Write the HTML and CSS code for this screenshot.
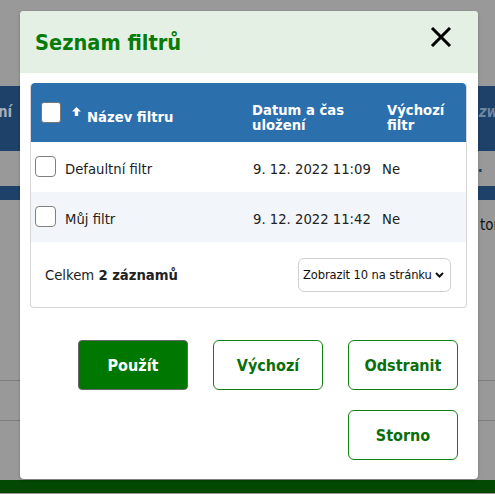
FILE: index.html
```html
<!DOCTYPE html>
<html lang="cs">
<head>
<meta charset="utf-8">
<title>Seznam filtrů</title>
<link rel="stylesheet" href="styles.css">
</head>
<body>
<div class="page">
  <div class="bg-top"></div>
  <div class="bg-band"><span class="bg-txt-l">ní</span><span class="bg-txt-r">zw</span></div>
  <div class="bg-gap"><span></span><span class="bg-dot">.</span></div>
  <div class="bg-band2"></div>
  <div class="bg-row"><span></span><span class="bg-txt-dark">tor</span></div>
  <div class="bg-fill"></div>
  <div class="bg-line"></div>
  <div class="bg-space"></div>
  <div class="bg-line"></div>
  <div class="bg-fill2"></div>
  <div class="bg-green"></div>
</div>

<div class="modal">
  <div class="modal-head">
    <h2 class="modal-title">Seznam filtrů</h2>
    <button class="close" aria-label="Zavřít">
      <svg width="22" height="20" viewBox="0 0 22 20"><path d="M2 1 L20 19 M20 1 L2 19" stroke="#000" stroke-width="3" fill="none"/></svg>
    </button>
  </div>
  <div class="modal-body">
    <div class="table">
      <div class="thead">
        <div class="th th-name">
          <span class="cb cb-head"></span>
          <svg class="arrow" width="9" height="9" viewBox="0 0 9 9"><path d="M4.5 0 L9 4.6 L6.2 4.6 L6.2 9 L2.8 9 L2.8 4.6 L0 4.6 Z" fill="#fff"/></svg>
          <span class="th-txt">Název filtru</span>
        </div>
        <div class="th th-date"><span class="th-txt">Datum a čas uložení</span></div>
        <div class="th th-def"><span class="th-txt">Výchozí filtr</span></div>
      </div>
      <div class="tr">
        <div class="td td-name"><span class="cb"></span><span>Defaultní filtr</span></div>
        <div class="td td-date">9. 12. 2022 11:09</div>
        <div class="td td-def">Ne</div>
      </div>
      <div class="tr tr-alt">
        <div class="td td-name"><span class="cb"></span><span>Můj filtr</span></div>
        <div class="td td-date">9. 12. 2022 11:42</div>
        <div class="td td-def">Ne</div>
      </div>
      <div class="tfoot">
        <span>Celkem <b>2 záznamů</b></span>
        <div class="select">
          <span class="select-txt">Zobrazit 10 na stránku</span>
          <svg width="9" height="6" viewBox="0 0 9 6"><path d="M1 1 L4.5 4.5 L8 1" stroke="#111" stroke-width="2" fill="none"/></svg>
        </div>
      </div>
    </div>
    <div class="actions">
      <button class="btn btn-primary">Použít</button>
      <button class="btn">Výchozí</button>
      <button class="btn">Odstranit</button>
      <button class="btn">Storno</button>
    </div>
  </div>
</div>
</body>
</html>
```
FILE: styles.css
```css
* { box-sizing: border-box; }
html, body { margin: 0; padding: 0; }
body {
  width: 495px;
  height: 494px;
  overflow: hidden;
  position: relative;
  background: #999;
  font-family: "DejaVu Sans Condensed", "DejaVu Sans", sans-serif;
  font-size: 14.7px;
  color: #222;
}

/* background page under overlay */
.page { display: flex; flex-direction: column; width: 495px; }
.bg-top { height: 86px; }
.bg-band {
  height: 65px; background: #1d4168;
  display: flex; justify-content: space-between; align-items: center;
  padding-bottom: 14px;
}
.bg-txt-l { color: #a7b0bc; font-weight: bold; font-size: 15px; margin-left: -2px; }
.bg-txt-r { color: #6f87a3; font-weight: bold; font-style: italic; font-size: 15px; margin-right: -4px; }
.bg-gap { height: 35px; display: flex; justify-content: space-between; align-items: flex-start; }
.bg-dot { color: #1d4168; font-weight: bold; margin-right: 12px; margin-top: 8px; font-size: 16px; line-height: 16px; }
.bg-band2 { height: 14px; background: #1d4168; }
.bg-row { height: 50px; display: flex; justify-content: space-between; align-items: center; }
.bg-txt-dark { color: #111; font-size: 15px; margin-right: -4px; }
.bg-fill { height: 130px; }
.bg-line { height: 1px; background: #7d7d7d; }
.bg-space { height: 39px; }
.bg-fill2 { height: 59px; }
.bg-green { height: 13px; background: #034803; }

/* modal */
.modal {
  position: absolute;
  left: 20px; top: 11px;
  width: 458px; height: 468px;
  background: #fff;
  border-radius: 4px;
  box-shadow: 0 1px 3px rgba(0,0,0,0.25);
  overflow: hidden;
}
.modal-head {
  height: 62px;
  background: #e5f0e4;
  display: flex; align-items: center; justify-content: space-between;
  padding: 0 26px 0 15px;
}
.modal-title {
  margin: 0;
  font-size: 21.6px;
  font-weight: bold;
  color: #087a08;
  padding-top: 1px;
}
.close {
  background: none; border: 0; padding: 0; display: flex;
  align-self: flex-start; margin-top: 16px;
}

.modal-body { padding: 10px 20px 0 10px; }
.table {
  width: 437px;
  border: 1px solid #d6d6d6;
  border-top: 0;
  border-radius: 4px;
  overflow: hidden;
}
.thead {
  display: grid;
  grid-template-columns: 216px 132px 1fr;
  height: 59px;
  background: #2b6fad;
  color: #fff;
  font-weight: bold;
  border-radius: 4px 4px 0 0;
  line-height: 15px;
}
.th { display: flex; align-items: center; }
.th-txt { margin-top: 8px; }
.th-name { padding-left: 10px; }
.th-date { padding-left: 5px; padding-right: 20px; }
.th-def { padding-left: 8px; padding-right: 10px; }
.cb {
  width: 21px; height: 21px;
  border: 1px solid #808080;
  border-radius: 4px;
  background: #fff;
  flex: none;
}
.cb-head { width: 20px; height: 21px; border-color: #777; border-radius: 3px; }
.arrow { margin: -2px 6px 0 11px; }

.tr {
  display: grid;
  grid-template-columns: 216px 132px 1fr;
  height: 50px;
  align-items: center;
  padding-top: 2px;
}
.tr-alt { background: #f2f6fa; }
.td-name { display: flex; align-items: center; gap: 9px; padding-left: 4px; }
.td-name .cb { margin-top: -4px; }
.td-date { padding-left: 6px; }
.td-def { padding-left: 3px; }

.tfoot {
  height: 65px;
  display: flex; align-items: center; justify-content: space-between;
  padding: 0 15px 0 14px;
}
.tfoot b { font-weight: bold; }
.select {
  width: 153px; height: 34px;
  border: 1px solid #d0d0d0;
  border-radius: 6px;
  display: flex; align-items: center; justify-content: space-between;
  padding: 0 6px 0 4px;
  font-size: 12.8px;
  color: #111;
  white-space: nowrap;
}
.select-txt { letter-spacing: -0.1px; }

.actions {
  margin-top: 32px;
  display: flex; flex-wrap: wrap; justify-content: flex-end;
  gap: 20px 25px;
}
.btn {
  width: 110px; height: 50px;
  border: 1px solid #138013;
  border-radius: 6px;
  background: #fff;
  color: #0a6e0a;
  font-family: inherit;
  font-size: 16px;
  font-weight: bold;
  padding: 0;
}
.btn-primary {
  background: #007700;
  color: #fff;
  border-color: #666;
  border-radius: 4px;
}
```
